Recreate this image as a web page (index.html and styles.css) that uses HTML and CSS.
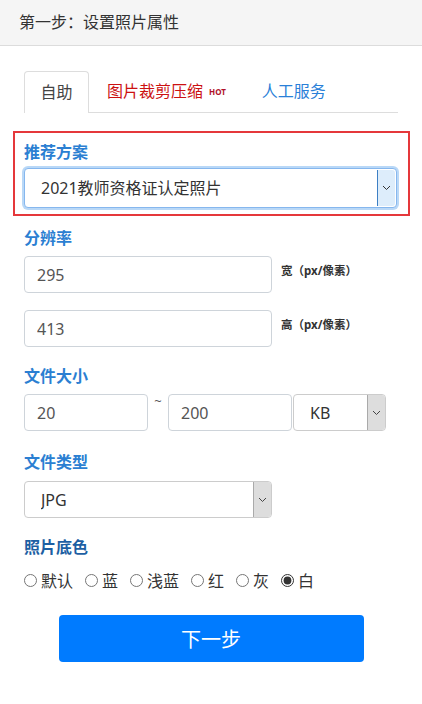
FILE: index.html
```html
<!DOCTYPE html>
<html lang="zh-CN">
<head>
    <meta charset="UTF-8">
    <meta name="viewport" content="width=device-width, initial-scale=1.0">
    <title>设置照片属性</title>
    <link rel="stylesheet" href="styles.css">
</head>
<body>
    <div class="header">第一步：设置照片属性</div>
    <div class="content">
        <ul class="tabs">
            <li class="tab active">自助</li>
            <li class="tab tab-red">图片裁剪压缩<span class="hot">HOT</span></li>
            <li class="tab tab-blue">人工服务</li>
        </ul>

        <div class="recommend">
            <div class="label">推荐方案</div>
            <div class="select select-focus select-wide">
                <select>
                    <option>2021教师资格证认定照片</option>
                </select>
                <span class="select-arrow">
                    <svg width="9" height="6" viewBox="0 0 9 6"><path d="M1 1l3.5 3.5L8 1" fill="none" stroke="#333" stroke-width="1"/></svg>
                </span>
            </div>
        </div>

        <div class="label label-gap">分辨率</div>
        <div class="size-row">
            <input class="input input-main" type="text" value="295">
            <span class="unit">宽（px/像素）</span>
        </div>
        <div class="size-row">
            <input class="input input-main" type="text" value="413">
            <span class="unit">高（px/像素）</span>
        </div>

        <div class="label label-gap2">文件大小</div>
        <div class="file-row">
            <input class="input input-small" type="text" value="20">
            <span class="tilde">~</span>
            <input class="input input-small" type="text" value="200">
            <div class="select select-kb">
                <select>
                    <option>KB</option>
                </select>
                <span class="select-arrow">
                    <svg width="9" height="6" viewBox="0 0 9 6"><path d="M1 1l3.5 3.5L8 1" fill="none" stroke="#444" stroke-width="1"/></svg>
                </span>
            </div>
        </div>

        <div class="label label-gap3">文件类型</div>
        <div class="select select-type">
            <select>
                <option>JPG</option>
            </select>
            <span class="select-arrow">
                <svg width="9" height="6" viewBox="0 0 9 6"><path d="M1 1l3.5 3.5L8 1" fill="none" stroke="#444" stroke-width="1"/></svg>
            </span>
        </div>

        <div class="label label-dark">照片底色</div>
        <div class="colors">
            <label class="radio"><input type="radio" name="bg">默认</label>
            <label class="radio"><input type="radio" name="bg">蓝</label>
            <label class="radio"><input type="radio" name="bg">浅蓝</label>
            <label class="radio"><input type="radio" name="bg">红</label>
            <label class="radio"><input type="radio" name="bg">灰</label>
            <label class="radio"><input type="radio" name="bg" checked>白</label>
        </div>

        <div class="actions">
            <button class="next-btn" type="button">下一步</button>
        </div>
    </div>
</body>
</html>
```

FILE: styles.css
```css
body {
    font-family: 'Noto Sans', 'Noto Sans CJK SC', sans-serif;
    background-color: #ffffff;
    color: #333;
    margin: 0;
    padding: 0;
}
.header {
    height: 45px;
    line-height: 45px;
    padding-left: 19px;
    font-size: 16px;
    color: #333;
    background-color: #f5f5f5;
    border-bottom: 1px solid #dcdcdc;
}
.content {
    padding: 0 24px;
}
.tabs {
    list-style: none;
    margin: 25px 0 0;
    padding: 0;
    display: flex;
    height: 41px;
    border-bottom: 1px solid #dddddd;
}
.tab {
    height: 41px;
    line-height: 41px;
    font-size: 16px;
    padding: 0 18px;
    box-sizing: border-box;
}
.tab.active {
    width: 65px;
    padding: 0;
    text-align: center;
    height: 42px;
    color: #444;
    background: #fff;
    border: 1px solid #dddddd;
    border-bottom: none;
    border-radius: 4px 4px 0 0;
}
.tab-red {
    color: #cc1111;
    padding-right: 20px;
}
.tab-blue {
    color: #2a80d8;
    padding-left: 16px;
}
.hot {
    font-size: 8px;
    font-weight: bold;
    color: #b0102a;
    margin-left: 6px;
    vertical-align: 2px;
}
.recommend {
    margin: 18px -12px 0 -11px;
    border: 2px solid #e5383b;
    padding: 7px 11px 6px 9px;
}
.label {
    font-size: 16px;
    font-weight: bold;
    color: #2b7fd2;
    line-height: 24px;
    margin-bottom: 4px;
}
.label-dark {
    color: #1d5fa3;
    margin-top: 17px;
    margin-bottom: 6px;
}
.label-gap {
    margin-top: 10px;
    margin-bottom: 6px;
}
.label-gap2 {
    margin-top: 15px;
    margin-bottom: 6px;
}
.label-gap3 {
    margin-top: 19px;
    margin-bottom: 7px;
}
.select {
    display: flex;
    height: 37px;
    box-sizing: border-box;
    border: 1px solid #cccccc;
    border-radius: 4px;
    background: #fff;
    overflow: hidden;
}
.select select {
    flex: 1;
    min-width: 0;
    appearance: none;
    -webkit-appearance: none;
    border: none;
    outline: none;
    background: transparent;
    font-family: inherit;
    font-size: 16px;
    color: #333;
    padding: 0 0 0 16px;
}
.select-arrow {
    width: 17px;
    display: flex;
    align-items: center;
    justify-content: center;
    background: #dddddd;
    border-left: 1px solid #aaaaaa;
}
.select-wide {
    width: 373px;
    height: 40px;
}
.select-focus {
    border-color: #86b7ee;
    box-shadow: 0 0 0 2px #b9d8f7;
}
.select-focus .select-arrow {
    background: #ddedfb;
    border-left: 1px solid #3d7fc4;
    margin: 1px 1px 1px 0;
    border-radius: 0 3px 3px 0;
}
.size-row {
    display: flex;
    align-items: flex-start;
    margin-bottom: 17px;
}
.input {
    height: 37px;
    box-sizing: border-box;
    border: 1px solid #ced4da;
    border-radius: 4px;
    font-family: inherit;
    font-size: 16px;
    color: #555;
    padding: 0 12px;
    outline: none;
}
.input-main {
    width: 248px;
}
.unit {
    margin-left: 9px;
    margin-top: 6px;
    font-size: 11.5px;
    font-weight: bold;
    color: #333;
}
.file-row {
    display: flex;
    align-items: flex-start;
}
.input-small {
    width: 124px;
}
.tilde {
    width: 20px;
    text-align: center;
    font-size: 13px;
    line-height: 14px;
    color: #555;
}
.select-kb {
    width: 93px;
    margin-left: 1px;
}
.select-type {
    width: 248px;
}
.colors {
    display: flex;
    margin-top: 8px;
    height: 26px;
    align-items: center;
}
.radio {
    display: flex;
    align-items: center;
    font-size: 16px;
    color: #333;
    margin-right: 12px;
}
.radio input {
    width: 13px;
    height: 13px;
    margin: 0 4px 0 0;
    accent-color: #333;
}
.actions {
    display: flex;
    justify-content: center;
    margin-top: 22px;
}
.next-btn {
    width: 305px;
    height: 47px;
    border: none;
    border-radius: 4px;
    background-color: #007bff;
    color: #fff;
    font-family: inherit;
    font-size: 20px;
    cursor: pointer;
}
```
